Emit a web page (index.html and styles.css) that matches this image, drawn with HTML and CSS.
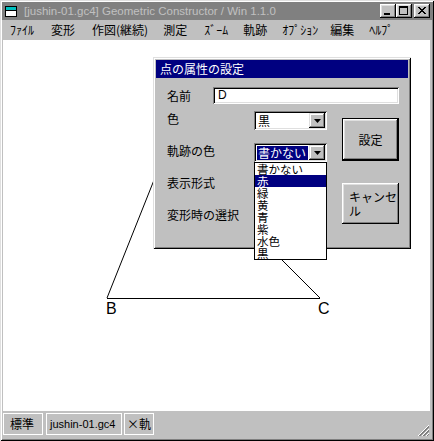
FILE: index.html
```html
<!DOCTYPE html>
<html lang="ja">
	<head>
		<meta charset="UTF-8">
		<title>Geometric Constructor</title>
		<link rel="stylesheet" href="styles.css">
	</head>
	<body>
		<div class="window">
			<div class="titlebar">
				<svg class="app-icon" width="12" height="11" viewBox="0 0 12 11">
					<rect x="0.5" y="0.5" width="11" height="10" fill="#fff" stroke="#000"/>
					<rect x="1" y="1" width="10" height="3" fill="#00c0c0"/>
					<line x1="1" y1="4.5" x2="11" y2="4.5" stroke="#000"/>
				</svg>
				<span class="title-text">[jushin-01.gc4] Geometric Constructor / Win 1.1.0</span>
				<div class="title-buttons">
					<span class="tbtn">
						<svg width="16" height="14" viewBox="0 0 16 14"><rect x="4" y="9" width="6" height="2" fill="#000"/></svg>
					</span>
					<span class="tbtn">
						<svg width="16" height="14" viewBox="0 0 16 14"><rect x="3.5" y="2.5" width="8" height="8" fill="none" stroke="#000"/><rect x="3" y="2" width="9" height="2" fill="#000"/></svg>
					</span>
					<span class="tbtn close">
						<svg width="16" height="14" viewBox="0 0 16 14"><path d="M4 3 L11 10 M5 3 L12 10 M11 3 L4 10 M12 3 L5 10" stroke="#000" stroke-width="1" shape-rendering="crispEdges"/></svg>
					</span>
				</div>
			</div>
			<div class="menubar">
				<span>ﾌｧｲﾙ</span>
				<span>変形</span>
				<span>作図(継続)</span>
				<span>測定</span>
				<span>ｽﾞｰﾑ</span>
				<span>軌跡</span>
				<span>ｵﾌﾟｼｮﾝ</span>
				<span>編集</span>
				<span>ﾍﾙﾌﾟ</span>
			</div>
			<div class="client">
				<svg class="drawing" width="427" height="371" viewBox="0 0 427 371">
					<line x1="104" y1="258" x2="159" y2="120" stroke="#000"/>
					<line x1="317" y1="258" x2="250" y2="191" stroke="#000"/>
					<line x1="104" y1="258.5" x2="317" y2="258.5" stroke="#000" shape-rendering="crispEdges"/>
					<text x="103" y="274" class="pt-label">B</text>
					<text x="315" y="274" class="pt-label">C</text>
				</svg>
				<div class="dialog">
					<div class="dialog-title">点の属性の設定</div>
					<div class="name-row">
						<span class="name-label">名前</span>
						<div class="textbox">D</div>
					</div>
					<div class="fields-row">
						<div class="fields">
							<div class="field">
								<span class="field-label">色</span>
								<div class="combo">
									<span class="combo-text">黒</span>
									<span class="combo-arrow"><svg width="7" height="4" viewBox="0 0 7 4"><path d="M0 0 H7 L3.5 4 Z" fill="#000"/></svg></span>
								</div>
							</div>
							<div class="field">
								<span class="field-label">軌跡の色</span>
								<div class="combo">
									<span class="combo-text"><span class="selected">書かない</span></span>
									<span class="combo-arrow"><svg width="7" height="4" viewBox="0 0 7 4"><path d="M0 0 H7 L3.5 4 Z" fill="#000"/></svg></span>
								</div>
							</div>
							<div class="field">
								<span class="field-label">表示形式</span>
							</div>
							<div class="field">
								<span class="field-label">変形時の選択</span>
							</div>
						</div>
						<div class="buttons">
							<div class="btn default">設定</div>
							<div class="btn cancel">キャンセル</div>
						</div>
					</div>
					<ul class="dropdown-list">
						<li><span>書かない</span></li>
						<li class="active"><span>赤</span></li>
						<li><span>緑</span></li>
						<li><span>黄</span></li>
						<li><span>青</span></li>
						<li><span>紫</span></li>
						<li><span>水色</span></li>
						<li><span>黒</span></li>
					</ul>
				</div>
			</div>
			<div class="statusbar">
				<span class="panel panel-mode">標準</span>
				<span class="panel panel-file">jushin-01.gc4</span>
				<span class="panel panel-track">×軌</span>
				<svg class="grip" width="13" height="13" viewBox="0 0 13 13">
					<path d="M12 1 L1 12 M12 5 L5 12 M12 9 L9 12" stroke="#fff"/>
					<path d="M12 2 L2 12 M12 3 L3 12 M12 6 L6 12 M12 7 L7 12 M12 10 L10 12" stroke="#808080"/>
				</svg>
			</div>
		</div>
	</body>
</html>
```

FILE: styles.css
```css
:root{
	--face:#c0c0c0;
	--shadow:#808080;
	--navy:#000080;
}
body{
	margin:0;
	background:#fff;
	font-family:"Noto Sans CJK JP", "Liberation Sans", sans-serif;
	font-size:12px;
}
.window{
	width:434px;
	height:441px;
	box-sizing:border-box;
	padding:2px;
	background:var(--face);
	box-shadow:inset 1px 1px #dfdfdf, inset -1px -1px #000, inset 2px 2px #fff, inset -2px -2px var(--shadow);
	display:flex;
	flex-direction:column;
}
.titlebar{
	height:18px;
	background:var(--shadow);
	display:flex;
	align-items:center;
	padding:0 2px 0 3px;
	flex-shrink:0;
}
.app-icon{
	margin-top:1px;
}
.title-text{
	font-family:"Liberation Sans", sans-serif;
	font-size:11.5px;
	color:var(--face);
	margin-left:7px;
	white-space:nowrap;
}
.title-buttons{
	margin-left:auto;
	display:flex;
}
.tbtn{
	width:16px;
	height:14px;
	background:var(--face);
	box-shadow:inset -1px -1px #000, inset 1px 1px #fff, inset -2px -2px var(--shadow), inset 2px 2px #dfdfdf;
	display:block;
}
.tbtn svg{
	display:block;
}
.tbtn.close{
	margin-left:2px;
}
.menubar{
	height:19px;
	display:flex;
	align-items:center;
	gap:15px;
	padding-left:8px;
	flex-shrink:0;
	line-height:14px;
}
.menubar span:nth-child(2){
	margin-left:2px;
}
.menubar span:nth-child(3){
	margin-left:2px;
}
.menubar span:nth-child(5){
	margin-left:2px;
}
.menubar span:nth-child(8){
	margin-left:-3px;
}
.client{
	position:relative;
	margin:1px 2px 0 1px;
	height:371px;
	background:#fff;
	flex-shrink:0;
}
.drawing{
	display:block;
}
.pt-label{
	font-family:"Liberation Sans", sans-serif;
	font-size:16px;
	fill:#000;
}
.dialog{
	position:absolute;
	left:150px;
	top:17px;
	width:258px;
	height:192px;
	box-sizing:border-box;
	padding:3px;
	background:var(--face);
	box-shadow:inset 1px 1px #dfdfdf, inset -1px -1px #000, inset 2px 2px #fff, inset -2px -2px var(--shadow);
}
.dialog-title{
	height:18px;
	line-height:18px;
	background:var(--navy);
	color:#fff;
	padding-left:4px;
}
.name-row{
	display:flex;
	align-items:center;
	margin-top:9px;
	padding-left:11px;
}
.name-label{
	width:46px;
}
.textbox{
	width:186px;
	height:17px;
	box-sizing:border-box;
	padding:2px 0 0 5px;
	background:#fff;
	box-shadow:inset 1px 1px var(--shadow), inset -1px -1px #fff, inset 2px 2px #000, inset -2px -2px #dfdfdf;
	font-family:"Liberation Sans", sans-serif;
	line-height:13px;
}
.fields-row{
	display:flex;
	margin-top:7px;
}
.fields{
	padding-left:11px;
	display:flex;
	flex-direction:column;
	gap:13px;
}
.field{
	display:flex;
	height:19px;
}
.field-label{
	width:87px;
	line-height:14px;
	padding-top:1px;
}
.combo{
	width:73px;
	height:19px;
	box-sizing:border-box;
	padding:2px;
	display:flex;
	background:#fff;
	box-shadow:inset 1px 1px var(--shadow), inset -1px -1px #fff, inset 2px 2px #000, inset -2px -2px #dfdfdf;
}
.combo-text{
	flex:1;
	overflow:hidden;
	white-space:nowrap;
	padding:1px 1px 0 2px;
	line-height:14px;
}
.selected{
	background:var(--navy);
	color:#fff;
	display:block;
	margin-left:-1px;
	padding-left:1px;
}
.combo-arrow{
	width:16px;
	height:15px;
	background:var(--face);
	box-shadow:inset -1px -1px #000, inset 1px 1px #dfdfdf, inset -2px -2px var(--shadow), inset 2px 2px #fff;
	display:flex;
	align-items:center;
	justify-content:center;
}
.buttons{
	margin-left:15px;
	margin-top:7px;
	display:flex;
	flex-direction:column;
	gap:22px;
}
.btn{
	width:57px;
	box-sizing:border-box;
	background:var(--face);
	box-shadow:inset -1px -1px #000, inset 1px 1px #fff, inset -2px -2px var(--shadow), inset 2px 2px #dfdfdf;
	display:flex;
	align-items:center;
}
.btn.default{
	height:43px;
	justify-content:center;
	border:1px solid #000;
}
.btn.cancel{
	height:41px;
	padding:0 0 0 7px;
	line-height:14px;
}
.dropdown-list{
	position:absolute;
	left:101px;
	top:105px;
	width:73px;
	box-sizing:border-box;
	margin:0;
	padding:0;
	list-style:none;
	background:#fff;
	border:1px solid #000;
}
.dropdown-list li{
	display:flex;
	height:12px;
	padding-left:2px;
}
.dropdown-list li span{
	display:block;
	height:12px;
	line-height:12px;
	font-size:11.5px;
	white-space:nowrap;
}
.dropdown-list li.active{
	background:var(--navy);
	color:#fff;
}
.statusbar{
	height:27px;
	display:flex;
	align-items:flex-start;
	padding:2px 0 0 1px;
	box-sizing:border-box;
	gap:3px;
	position:relative;
}
.panel{
	height:22px;
	box-sizing:border-box;
	border:1px solid #fff;
	line-height:20px;
	white-space:nowrap;
	overflow:hidden;
}
.panel-mode{
	width:40px;
	padding-left:6px;
}
.panel-file{
	width:76px;
	padding-left:3px;
	font-family:"Liberation Sans", sans-serif;
	font-size:11px;
}
.panel-track{
	width:30px;
	padding-left:2px;
	margin-left:-1px;
}
.grip{
	position:absolute;
	right:2px;
	bottom:1px;
}
```
